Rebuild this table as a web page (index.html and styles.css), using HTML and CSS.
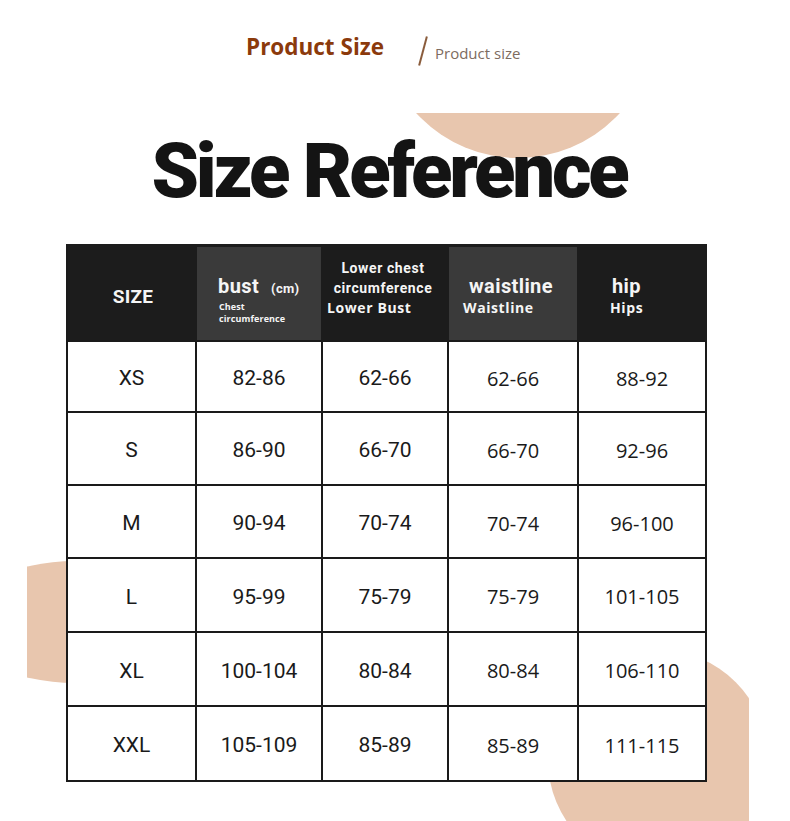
FILE: index.html
```html
<!DOCTYPE html>
<html lang="en">
<head>
<meta charset="utf-8">
<title>Size Reference</title>
<link rel="stylesheet" href="styles.css">
</head>
<body>
<div class="page">
  <div class="deco" aria-hidden="true">
    <span class="blob blob-top"></span>
    <span class="blob blob-left"></span>
    <span class="blob blob-right"></span>
  </div>

  <header class="brand">
    <span class="brand-main">Product Size</span>
    <span class="brand-slash"></span>
    <span class="brand-sub">Product size</span>
  </header>

  <h1 class="title">Size Reference</h1>

  <div class="size-table" role="table">
    <div class="th th-size" role="columnheader">SIZE</div>
    <div class="th th-bust th-light" role="columnheader">
      <div class="th-main">bust<span class="unit">(cm)</span></div>
      <div class="th-tiny">Chest<br>circumference</div>
    </div>
    <div class="th th-lower" role="columnheader">
      <div class="th-mid">Lower chest</div>
      <div class="th-mid">circumference</div>
      <div class="th-sub th-sub-lower">Lower Bust</div>
    </div>
    <div class="th th-waist th-light" role="columnheader">
      <div class="th-main">waistline</div>
      <div class="th-sub">Waistline</div>
    </div>
    <div class="th th-hip" role="columnheader">
      <div class="th-main">hip</div>
      <div class="th-sub">Hips</div>
    </div>

    <div class="td">XS</div><div class="td">82-86</div><div class="td">62-66</div><div class="td td-alt">62-66</div><div class="td td-alt">88-92</div>
    <div class="td">S</div><div class="td">86-90</div><div class="td">66-70</div><div class="td td-alt">66-70</div><div class="td td-alt">92-96</div>
    <div class="td">M</div><div class="td">90-94</div><div class="td">70-74</div><div class="td td-alt">70-74</div><div class="td td-alt">96-100</div>
    <div class="td">L</div><div class="td">95-99</div><div class="td">75-79</div><div class="td td-alt">75-79</div><div class="td td-alt">101-105</div>
    <div class="td">XL</div><div class="td">100-104</div><div class="td">80-84</div><div class="td td-alt">80-84</div><div class="td td-alt">106-110</div>
    <div class="td">XXL</div><div class="td">105-109</div><div class="td">85-89</div><div class="td td-alt">85-89</div><div class="td td-alt">111-115</div>
  </div>
</div>
</body>
</html>
```
FILE: styles.css
```css
* { box-sizing: border-box; }

html, body {
  margin: 0;
  padding: 0;
  background: #ffffff;
}

.page {
  position: relative;
  width: 790px;
  height: 821px;
  overflow: hidden;
  font-family: "Roboto", "Liberation Sans", sans-serif;
}

/* decorative peach circles behind the content */
.deco {
  position: absolute;
  left: 27px;
  top: 113px;
  width: 722px;
  height: 708px;
  overflow: hidden;
  z-index: 0;
}

.blob {
  position: absolute;
  border-radius: 50%;
  background: #e8c6ae;
}

.blob-top {
  left: 353px;
  top: -231px;
  width: 276px;
  height: 276px;
}

.blob-left {
  left: -67px;
  top: 448px;
  width: 230px;
  height: 122px;
}

.blob-right {
  left: 521px;
  top: 537px;
  width: 220px;
  height: 220px;
}

/* brand line */
.brand {
  position: relative;
  z-index: 1;
  display: flex;
  align-items: flex-start;
  height: 66px;
  padding: 31px 0 0 246px;
}

.brand-main {
  font-family: "Open Sans", "Liberation Sans", sans-serif;
  font-weight: 700;
  font-size: 22.5px;
  line-height: 31px;
  color: #8b3a0c;
}

.brand-slash {
  display: block;
  width: 2px;
  height: 30px;
  margin: 5px 0 0 38px;
  background: #8a5c3c;
  transform: rotate(15deg);
}

.brand-sub {
  font-family: "Open Sans", "Liberation Sans", sans-serif;
  font-weight: 400;
  font-size: 15px;
  line-height: 20px;
  color: #7d6b60;
  margin: 12px 0 0 11px;
}

/* big title */
.title {
  position: relative;
  z-index: 1;
  margin: 67px 0 0 0;
  padding-right: 12px;
  text-align: center;
  font-family: "Roboto", "Liberation Sans", sans-serif;
  font-weight: 900;
  font-size: 76px;
  line-height: 76px;
  letter-spacing: -3.2px;
  color: #141414;
}

/* size table */
.size-table {
  position: relative;
  z-index: 1;
  margin: 35px 0 0 66px;
  width: 641px;
  display: grid;
  grid-template-columns: 129px 126px 126px 130px 128px;
  grid-template-rows: 96px 71px 73px 73px 74px 74px 75px;
  border-left: 2px solid #1a1a1a;
  border-top: 2px solid #1c1c1c;
}

.th {
  background: #1c1c1c;
  border-right: 2px solid #1c1c1c;
  border-bottom: 2px solid #1a1a1a;
  color: #f5f5f5;
}

.th:last-of-type {
  border-right-color: #1a1a1a;
}

.th-light {
  background: #3a3a3a;
  box-shadow: inset 0 1px 0 #1c1c1c;
}

.th-size {
  display: flex;
  align-items: center;
  justify-content: center;
  padding: 6px 0 0 3px;
  font-weight: 700;
  font-size: 19px;
  letter-spacing: 0.3px;
}

.th-main {
  font-weight: 700;
  font-size: 20px;
  line-height: 24px;
  letter-spacing: 0.4px;
}

.unit {
  font-size: 13px;
  font-weight: 700;
  margin-left: 12px;
  letter-spacing: 0.3px;
}

.th-tiny {
  font-family: "Open Sans", "Liberation Sans", sans-serif;
  font-weight: 700;
  font-size: 9px;
  line-height: 12px;
  padding-left: 1px;
  letter-spacing: 0.1px;
}

.th-sub {
  font-family: "Open Sans", "Liberation Sans", sans-serif;
  font-weight: 700;
  font-size: 14px;
  line-height: 20px;
  letter-spacing: 0.6px;
}

.th-mid {
  font-weight: 700;
  font-size: 14px;
  line-height: 20px;
  letter-spacing: 0.6px;
  text-align: center;
  padding-right: 4px;
}

.th-bust { padding: 28px 0 0 21px; }
.th-lower { padding: 12px 0 0 0; }
.th-sub-lower { padding-left: 4px; }
.th-waist { padding: 28px 0 0 0; }
.th-waist .th-main { padding-left: 20px; }
.th-waist .th-sub { padding-left: 14px; }
.th-hip { padding: 28px 0 0 0; }
.th-hip .th-main { padding-left: 33px; }
.th-hip .th-sub { padding-left: 31px; }

.td {
  display: flex;
  align-items: center;
  justify-content: center;
  padding-top: 3px;
  background: #ffffff;
  border-right: 2px solid #1a1a1a;
  border-bottom: 2px solid #1a1a1a;
  font-size: 21px;
  font-weight: 400;
  color: #1a1a1a;
}

.td-alt {
  font-family: "Open Sans", "Liberation Sans", sans-serif;
  font-size: 20px;
}
```
